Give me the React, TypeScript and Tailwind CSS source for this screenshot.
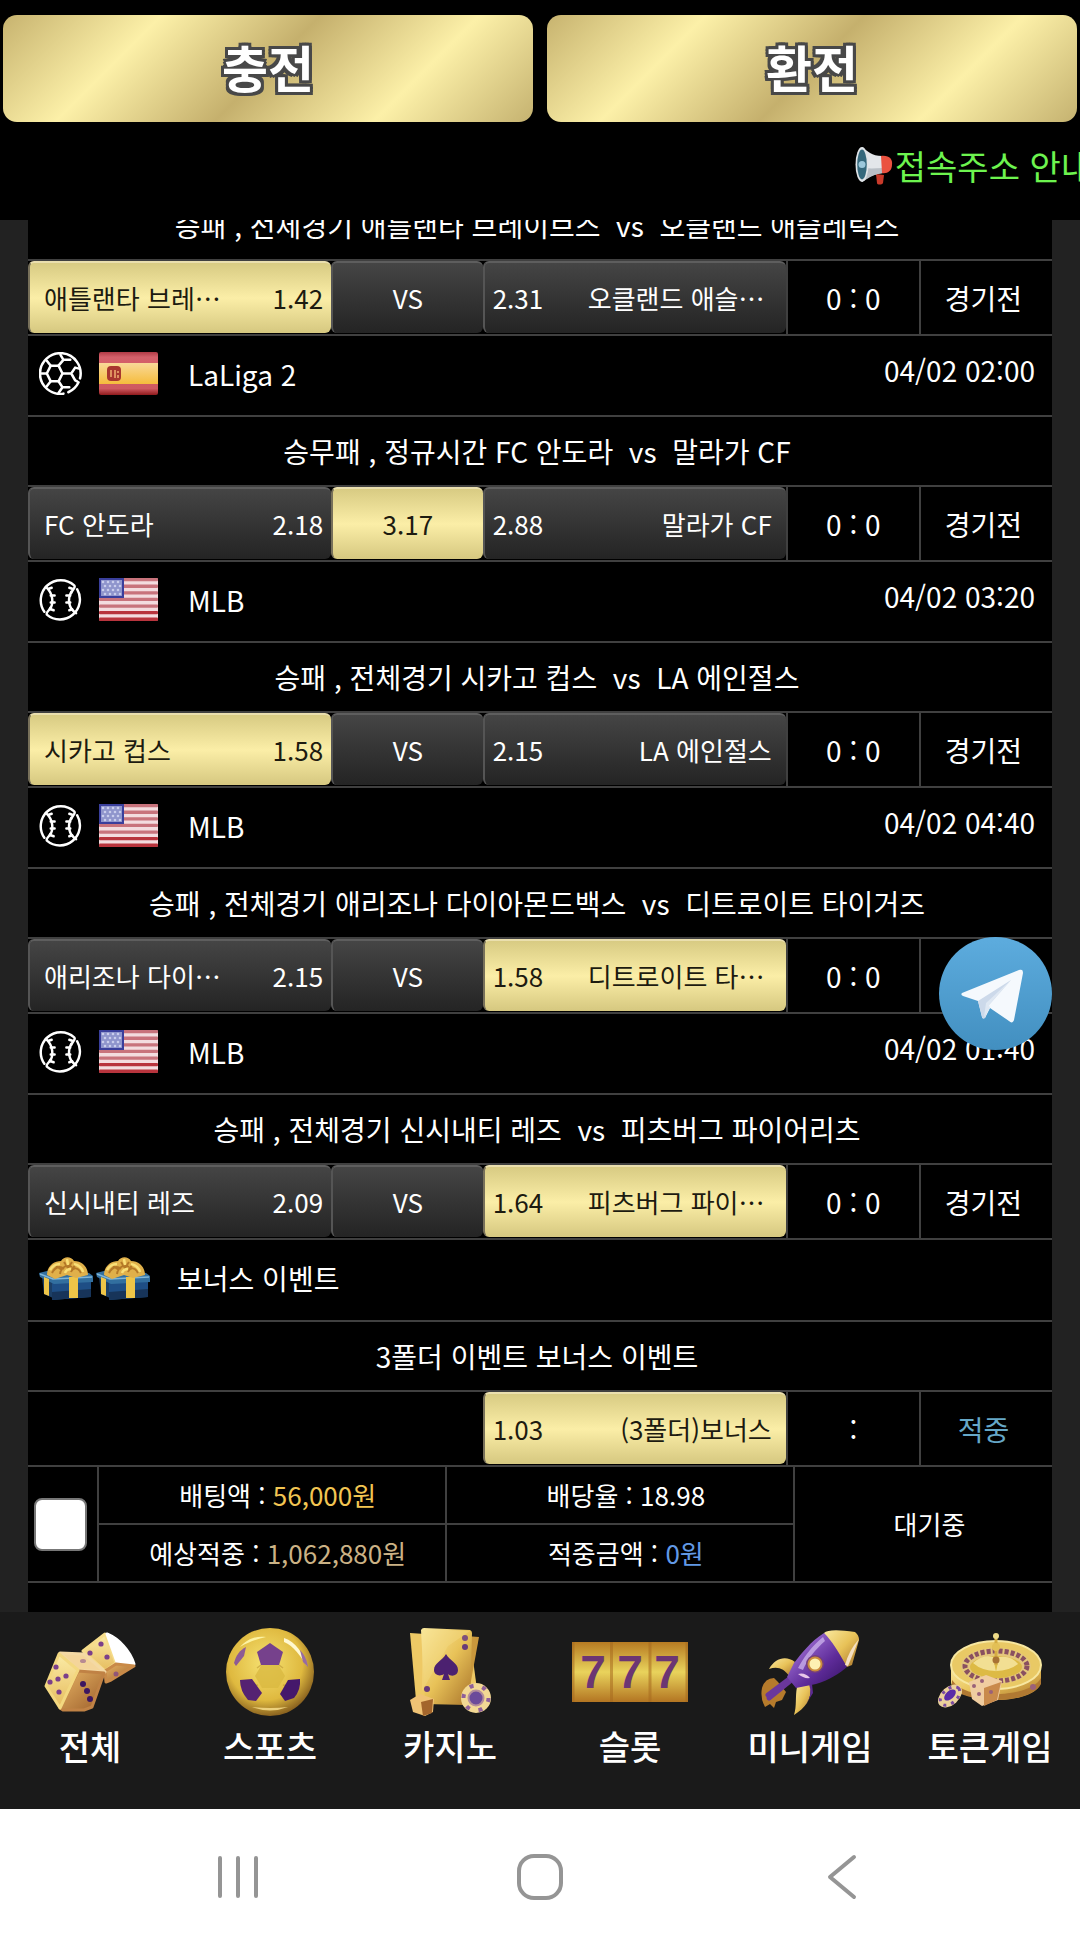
import type { ReactNode } from "react";

type Side = "home" | "draw" | "away";

type Bet = {
  sport: "soccer" | "baseball";
  flag: "es" | "us";
  league: string;
  date: string;
  title: string;
  home: string;
  homeOdds: string;
  draw: string;
  away: string;
  awayOdds: string;
  picked: Side;
};

const firstBet: Bet = {
  sport: "baseball",
  flag: "us",
  league: "MLB",
  date: "04/02 01:15",
  title: "승패 , 전체경기 애틀랜타 브레이브스 \u00a0vs \u00a0오클랜드 애슬레틱스",
  home: "애틀랜타 브레이브스",
  homeOdds: "1.42",
  draw: "VS",
  away: "오클랜드 애슬레틱스",
  awayOdds: "2.31",
  picked: "home",
};

const bets: Bet[] = [
  {
    sport: "soccer",
    flag: "es",
    league: "LaLiga 2",
    date: "04/02 02:00",
    title: "승무패 , 정규시간 FC 안도라 \u00a0vs \u00a0말라가 CF",
    home: "FC 안도라",
    homeOdds: "2.18",
    draw: "3.17",
    away: "말라가 CF",
    awayOdds: "2.88",
    picked: "draw",
  },
  {
    sport: "baseball",
    flag: "us",
    league: "MLB",
    date: "04/02 03:20",
    title: "승패 , 전체경기 시카고 컵스 \u00a0vs \u00a0LA 에인절스",
    home: "시카고 컵스",
    homeOdds: "1.58",
    draw: "VS",
    away: "LA 에인절스",
    awayOdds: "2.15",
    picked: "home",
  },
  {
    sport: "baseball",
    flag: "us",
    league: "MLB",
    date: "04/02 04:40",
    title: "승패 , 전체경기 애리조나 다이아몬드백스 \u00a0vs \u00a0디트로이트 타이거즈",
    home: "애리조나 다이아몬드백스",
    homeOdds: "2.15",
    draw: "VS",
    away: "디트로이트 타이거즈",
    awayOdds: "1.58",
    picked: "away",
  },
  {
    sport: "baseball",
    flag: "us",
    league: "MLB",
    date: "04/02 01:40",
    title: "승패 , 전체경기 신시내티 레즈 \u00a0vs \u00a0피츠버그 파이어리츠",
    home: "신시내티 레즈",
    homeOdds: "2.09",
    draw: "VS",
    away: "피츠버그 파이어리츠",
    awayOdds: "1.64",
    picked: "away",
  },
];

const SoccerIcon = () => (
  <svg viewBox="0 0 44 44" className="h-[43px] w-[43px]" fill="none" stroke="#fff" strokeWidth="2.6" strokeLinecap="round" strokeLinejoin="round">
    <path d="M25 42.6A20.8 20.8 0 1 1 42 27" />
    <path d="M40.5 31A20.8 20.8 0 0 1 30 41.2" />
    <path d="M12 14l8 0 4 8-4 8h-8l-4-8z" />
    <path d="M24 22h9l4-6 4 1M33 22l4 7 2 1M20 14l5-6-3-5M25 8h7M12 14L8 9M20 30l4 6-4 6M24 36h7M12 30l-4 5M8 22H2" />
  </svg>
);

const BaseballIcon = () => (
  <svg viewBox="0 0 44 44" className="h-[43px] w-[43px]" fill="none" stroke="#fff" strokeWidth="2.5" strokeLinecap="round" strokeLinejoin="round">
    <path d="M5.500 34.500A20.500 20.500 0 0 1 36 7.500c2 2-1 3-3 8" />
    <path d="M39 11.500A20.500 20.500 0 0 1 8 37.500c-1-3 2-3 3.500-7" />
    <path d="M7 9c8 7 8 18 4 23M33 14c-4 8-3 17 5 22" />
    <path d="M13 10l-3 1M16 18h-4M16 25h-4M15 33l-3-1M31 10l3 1M28 18h4M28 25h4M31 33l3-1" />
  </svg>
);

const SpainFlag = () => (
  <svg viewBox="0 0 59 43" className="h-[43px] w-[59px]">
    <defs>
      <linearGradient id="esRed" x1="0" y1="0" x2="0" y2="1">
        <stop offset="0" stopColor="#b03a45" />
        <stop offset=".12" stopColor="#d4606a" />
        <stop offset=".85" stopColor="#cf5960" />
        <stop offset="1" stopColor="#8f1a1c" />
      </linearGradient>
      <linearGradient id="esGold" x1="0" y1="0" x2="0" y2="1">
        <stop offset="0" stopColor="#f9d998" />
        <stop offset="1" stopColor="#f5bc3c" />
      </linearGradient>
    </defs>
    <rect width="59" height="43" rx="2" fill="url(#esRed)" />
    <rect y="11" width="59" height="21" fill="url(#esGold)" />
    <rect x="8" y="14" width="14" height="15" rx="4" fill="#a8362e" />
    <path d="M12 18v7M16 18v8M19 19v2M19 23v3" stroke="#f0b070" strokeWidth="1.500" />
  </svg>
);

const UsFlag = () => (
  <svg viewBox="0 0 59 43" className="h-[43px] w-[59px]">
    <rect width="59" height="43" rx="2" fill="#f3dcdf" />
    {[0, 1, 2, 3, 4, 5, 6].map((i) => (
      <rect key={i} y={i * 6.6} width="59" height="3.3" rx="1" fill={i > 4 ? "#b8343d" : "#c8737c"} />
    ))}
    <rect width="25" height="20" fill="#3a3f9c" />
    <rect x="2" y="2" width="21" height="16" fill="#8f95cc" />
    {[4, 8, 12, 16].map((y) =>
      [4, 9, 14, 19].map((x) => <circle key={x + "-" + y} cx={x + (y % 8 ? 0 : 2)} cy={y} r="1.300" fill="#c9cdec" />)
    )}
  </svg>
);

const GiftIcon = () => (
  <svg viewBox="0 0 54 43" className="h-[43px] w-[54px]">
    <path d="M3 20l11 4v17L5 37z" fill="#1c3f66" />
    <path d="M13 22h39v18l-39 3z" fill="#1e4e85" />
    <path d="M13 35l39-3v8l-39 3z" fill="#173459" />
    <path d="M0 16l12-3 38 3 4 3v6l-39 2-14-7z" fill="#326f9f" />
    <path d="M1 17l13 5 39-2" stroke="#7fb6d8" strokeWidth="1.500" fill="none" />
    <path d="M5 20l5 2v17l-5-2zM30 20h9v21h-9z" fill="#eec548" />
    <path d="M8 18C8 9 15 4 22 4c3-5 10-5 13 0 8 0 14 6 14 14l-12 3-9-3-12 4z" fill="#e0b04a" />
    <path d="M13 16c3-6 8-8 12-4M21 17c1-7 7-10 12-7M32 15c2-5 7-5 10 1M25 5l4 6 4-6M17 9l6 4M37 7l-4 5" stroke="#a5661c" strokeWidth="2" fill="none" opacity=".75" />
    <path d="M11 13c3-5 6-6 10-6M35 7c4 1 8 4 9 8M28 2l1 6M26 16c1-3 3-4 6-4" stroke="#f9df77" strokeWidth="2.500" fill="none" />
  </svg>
);

const MegaphoneIcon = () => (
  <svg viewBox="0 0 38 38" className="h-[38px] w-[38px]">
    <path d="M21 27l8 1-1 8c-1 2-6 2-6 0z" fill="#c93a2a" />
    <path d="M7 0c5 4 10 9 20 9l1 17c-9 1-15 4-21 9z" fill="#e3e6ea" />
    <path d="M10 21c7 1 12 0 18 0v5c-9 1-13 4-19 8z" fill="#b9bfc6" />
    <path d="M26 9c8-1 12 3 11 9 0 6-5 9-10 8z" fill="#ea5240" />
    <ellipse cx="7" cy="17.500" rx="6.500" ry="17.500" fill="#dfe4e8" />
    <ellipse cx="7" cy="17.500" rx="4.800" ry="15" fill="#35687c" />
    <circle cx="7" cy="17.500" r="3.500" fill="#9cc8dc" />
  </svg>
);

const TelegramIcon = () => (
  <svg viewBox="0 0 113 113" className="h-[113px] w-[113px]">
    <defs>
      <linearGradient id="tgBlue" x1="0" y1="0" x2="0" y2="1">
        <stop offset="0" stopColor="#5dacde" />
        <stop offset="1" stopColor="#428fc0" />
      </linearGradient>
    </defs>
    <circle cx="56.500" cy="56.500" r="56.500" fill="url(#tgBlue)" />
    <path d="M23 56l57-23c3-1 4 0 4 3L75 83c-1 3-3 3-5 1L51 71l-5 10c-2 1-3 0-3-1l-4-16-15-5c-2-1-2-2-1-3z" fill="#f5f9fd" />
    <path d="M39 64l33-21-22 25-4 13c-2 1-3 0-3-1z" fill="#ccd9ea" />
    <path d="M50 68l22-25-25 23-2 14 6-9z" fill="#dfe8f3" />
  </svg>
);

const GoldDefs = () => (
  <defs>
    <linearGradient id="gold" x1="0" y1="0" x2="1" y2="1">
      <stop offset="0" stopColor="#fae9a0" />
      <stop offset=".5" stopColor="#e8c258" />
      <stop offset="1" stopColor="#a8732a" />
    </linearGradient>
    <linearGradient id="goldSoft" x1="0" y1="0" x2="0" y2="1">
      <stop offset="0" stopColor="#fbeba6" />
      <stop offset="1" stopColor="#e6bc5e" />
    </linearGradient>
    <linearGradient id="goldDark" x1="0" y1="0" x2="1" y2="1">
      <stop offset="0" stopColor="#e8b566" />
      <stop offset="1" stopColor="#9c5e2a" />
    </linearGradient>
    <radialGradient id="goldBall" cx=".45" cy=".4" r=".6">
      <stop offset="0" stopColor="#f6e272" />
      <stop offset=".7" stopColor="#dfb93f" />
      <stop offset="1" stopColor="#8c6420" />
    </radialGradient>
    <linearGradient id="slot" x1="0" y1="0" x2="0" y2="1">
      <stop offset="0" stopColor="#b77b22" />
      <stop offset=".5" stopColor="#e9d35c" />
      <stop offset="1" stopColor="#b37522" />
    </linearGradient>
    <linearGradient id="purple" x1="0" y1="0" x2="1" y2="1">
      <stop offset=".2" stopColor="#9a6bd0" />
      <stop offset=".6" stopColor="#5f2c9a" />
      <stop offset="1" stopColor="#321060" />
    </linearGradient>
  </defs>
);

const DiceIcon = () => (
  <svg viewBox="0 0 92 80" className="h-[80px] w-[92px]" strokeLinejoin="round" strokeWidth="3">
    <GoldDefs />
    <path d="M39 19L61 2l11 29-11 8z" fill="url(#goldSoft)" stroke="#f6dc8a" />
    <path d="M63 2c12 5 23 17 27 30l-17-2z" fill="#fff" stroke="#fff" />
    <path d="M72 32l18 2-23 14-5 2-1-11z" fill="url(#goldDark)" stroke="#c98a48" />
    <path d="M16 21l24 1 21 18-27-2z" fill="#f4d59a" stroke="#f4d9a4" />
    <path d="M34 39l26 2-12 34-8 3H19l-3-2z" fill="url(#goldDark)" stroke="#c08245" />
    <path d="M15 22l19 16-18 38L2 54z" fill="url(#goldSoft)" stroke="#f3d880" />
    <g fill="#7b3f8a">
      <circle cx="12" cy="35" r="2.600" /><circle cx="6" cy="50" r="2.600" /><circle cx="14" cy="47" r="2.600" />
      <circle cx="22" cy="44" r="2.600" /><circle cx="15" cy="60" r="2.600" />
      <circle cx="46" cy="21" r="2.600" /><circle cx="57" cy="12" r="2.600" /><circle cx="63" cy="25" r="2.600" />
      <ellipse cx="39" cy="29" rx="3" ry="2" opacity=".5" /><circle cx="72" cy="42" r="2.500" opacity=".7" />
    </g>
    <g fill="#3d1660">
      <circle cx="39" cy="52" r="3" /><circle cx="43" cy="59" r="3" /><circle cx="46" cy="67" r="3" />
    </g>
  </svg>
);

const GoldBallIcon = () => (
  <svg viewBox="0 0 88 88" className="h-[88px] w-[88px]">
    <circle cx="44" cy="44" r="44" fill="url(#goldBall)" />
    <path d="M35 37L31 40M53 37l4 3M32 57l-5 1M57 57l4 1" stroke="#b58d2c" strokeWidth="1.500" opacity=".5" />
    <path d="M36 36h16l7 12-7 12H36l-7-12z" fill="#d9b941" opacity=".8" />
    <path d="M31 24l13-9 13 9-4 13H35z" fill="#76418c" />
    <path d="M14 52l12-1 10 14-6 8-8-1q-8-9-8-20z" fill="#552272" />
    <path d="M74 51l-12 1-8 14 5 7 9-3q7-8 6-19z" fill="#45186b" />
    <path d="M8 35c2-8 6-13 12-16l-2 9-8 10z" fill="#8e5b94" />
    <path d="M58 10c12 4 19 15 23 28-7-10-13-20-23-24z" fill="#fff8d0" />
    <path d="M74 22c5 5 7 11 8 17l-5-5z" fill="#976ba3" />
    <path d="M14 19c8-9 17-11 26-10-8 2-16 4-26 10z" fill="#fdf3a3" />
    <path d="M26 79q18 7 36 0-18 2-36 0z" fill="#ecd07c" />
  </svg>
);

const CardsIcon = () => (
  <svg viewBox="0 0 83 88" className="h-[88px] w-[83px]">
    <path d="M1 5l60 4 8 60-8 8L7 72z" fill="#eec965" />
    <path d="M30 6l40 3-12 66-40-3z" fill="#c9973c" />
    <path d="M12 2q1-2 3-2l46 2q2 1 2 3l-2 70q-1 3-3 2L16 76z" fill="url(#gold)" />
    <path d="M13 1l48 2-22 15-26 45z" fill="#f5df8d" opacity=".35" />
    <path d="M37 26c4 7 12 9 12 16 0 6-7 7-10 4l2 6h-8l2-6c-4 3-10 1-10-4 0-7 8-9 12-16z" fill="#4c2170" />
    <circle cx="56" cy="10" r="3" fill="#7d4f7c" /><circle cx="56" cy="19" r="3" fill="#683a78" />
    <circle cx="18" cy="61" r="3" fill="#683a78" />
    <path d="M1 72l10-6 14 5-1 13-8 4-12-4z" fill="#f0c375" />
    <path d="M12 74l12-3-1 14-9 3z" fill="#a3652c" />
    <circle cx="67" cy="70" r="15" fill="#f2d894" />
    <circle cx="67" cy="70" r="12.500" fill="none" stroke="#8f609a" strokeWidth="4" strokeDasharray="4 9" />
    <circle cx="67" cy="70" r="7.500" fill="#6b4a9a" stroke="#b58e9a" strokeWidth="2" />
  </svg>
);

const SlotIcon = () => (
  <svg viewBox="0 0 116 60" className="h-[60px] w-[116px]">
    <rect width="116" height="60" fill="url(#slot)" />
    <path d="M39.500 0v60M78 0v60M1 0v60M115 0v60" stroke="#a76a1f" strokeWidth="3" opacity=".55" />
    <g fill="#6c3673" fontFamily="'Liberation Sans', sans-serif" fontSize="46" fontWeight="700" textAnchor="middle">
      <text x="21" y="46">7</text>
      <text x="58" y="46">7</text>
      <text x="95" y="46">7</text>
    </g>
  </svg>
);

const RocketIcon = () => (
  <svg viewBox="0 0 100 86" className="h-[86px] w-[100px]">
    <path d="M2 59q3-10 12-10l4 4 8 10-4 8-6 2-2 6-4-4-5 3q-5-9-3-19z" fill="#b67b2c" />
    <path d="M35 33c-9-7-20-4-26 7 8-3 15-1 20 7z" fill="url(#gold)" />
    <path d="M51 55c1 16-6 24-17 31 3-9 1-18 3-28z" fill="url(#gold)" />
    <path d="M49 55q4 11-3 20l7-11-1-9z" fill="#5c2a92" />
    <path d="M32 48L8 66M30 52L9 69" stroke="#6a379c" strokeWidth="5" strokeLinecap="round" />
    <path d="M64 4C50 13 42 24 34 34l-7 14 9 11 20-4c13-4 23-10 32-18L80 12z" fill="url(#purple)" />
    <path d="M63 8C51 18 44 28 38 39l5 2c5-12 12-20 22-29z" fill="#ceb4ee" opacity=".75" />
    <path d="M64 4q5-5 31-1 4 3 4 8l-7 25-5 2C78 22 72 12 64 4z" fill="url(#gold)" />
    <path d="M99 10l-11 27-3-1q4-15 14-26z" fill="#f4dfc1" />
    <circle cx="55" cy="35" r="9" fill="#753f7c" />
    <circle cx="55" cy="35" r="6.500" fill="#fdf0b2" stroke="#cb8e3d" strokeWidth="2" />
    <path d="M38 45q7-2 12 4-6 1-12-4z" fill="#e8c6e8" />
  </svg>
);

const RouletteIcon = () => (
  <svg viewBox="0 0 105 80" className="h-[80px] w-[105px]">
    <path d="M13 32v18c0 12 30 19 50 18s40-7 40-20V32z" fill="url(#gold)" />
    <path d="M14 48c10 14 30 15 48 14s36-6 41-16v6c-5 10-25 16-44 16s-42-5-45-14z" fill="#b07932" />
    <ellipse cx="58" cy="33" rx="45" ry="24" fill="#e9c965" stroke="#f7e7a0" strokeWidth="2" />
    <ellipse cx="58" cy="34" rx="35" ry="18" fill="#e5c77c" />
    <ellipse cx="58" cy="34" rx="31" ry="15" fill="none" stroke="#8a5060" strokeWidth="5" strokeDasharray="4 2" />
    <ellipse cx="58" cy="35" rx="26" ry="11" fill="#ddba45" />
    <path d="M35 31q10-9 20-6l3 15 3-15q12-2 19 7-9 7-22 7-14 0-23-8z" fill="#fbf0b5" opacity=".7" />
    <path d="M58 3v30" stroke="#d5ad42" strokeWidth="3" />
    <circle cx="58" cy="4" r="3" fill="#eedb89" />
    <circle cx="58" cy="15" r="4" fill="#e3c056" />
    <circle cx="58" cy="28" r="3.500" fill="#a87234" />
    <path d="M31 50l17-7 16 6-4 19-16 6-10-7z" fill="#f0cda0" />
    <path d="M46 56l17-6-4 18-13 6z" fill="#c98a4b" />
    <g fill="#9a6179">
      <circle cx="36" cy="54" r="2" /><circle cx="41" cy="62" r="2" /><circle cx="44" cy="49" r="2" /><circle cx="53" cy="60" r="2" /><circle cx="95" cy="55" r="3" />
    </g>
    <ellipse cx="12" cy="64" rx="14" ry="9" transform="rotate(-42 12 64)" fill="#ecd29c" />
    <ellipse cx="12" cy="64" rx="11.500" ry="7" transform="rotate(-42 12 64)" fill="none" stroke="#7a4ba0" strokeWidth="3" strokeDasharray="3 5" />
    <ellipse cx="12" cy="63" rx="7" ry="4" transform="rotate(-42 12 63)" fill="#5a2ba8" />
  </svg>
);

const navItems = [
  { label: "전체", icon: <DiceIcon /> },
  { label: "스포츠", icon: <GoldBallIcon /> },
  { label: "카지노", icon: <CardsIcon /> },
  { label: "슬롯", icon: <SlotIcon /> },
  { label: "미니게임", icon: <RocketIcon /> },
  { label: "토큰게임", icon: <RouletteIcon /> },
];

const GoldButton = ({ children }: { children: ReactNode }) => (
  <button
    type="button"
    className="h-[107px] flex-1 rounded-[14px] bg-[linear-gradient(135deg,#c7b36f_0%,#fcf0a8_25%,#c5b06d_50%,#fcf0a8_75%,#c5b270_100%)] pb-1.5 text-[50px] font-bold text-white [text-shadow:-3px_-3px_0_#484848,0_-3px_0_#484848,3px_-3px_0_#484848,-3px_0_0_#484848,3px_0_0_#484848,-3px_3px_0_#484848,0_3px_0_#484848,3px_3px_0_#484848]"
  >
    {children}
  </button>
);

const PickButton = ({ active, children }: { active: boolean; children: ReactNode }) => (
  <button
    type="button"
    className={
      active
        ? "flex h-[72px] w-full items-center justify-between rounded-md border-l-2 border-t-2 border-l-[#77705a] border-t-[#eadfae] bg-linear-to-b from-[#d8cb83] via-[#fbeea7] to-[#d6c880] px-2 text-[26px] text-[#1d1b10]"
        : "flex h-[72px] w-full items-center justify-between rounded-md border-l-2 border-t-2 border-l-[#555] border-t-[#5e5e5e] bg-linear-to-b from-[#454545] to-[#242424] px-2 text-[26px] text-white"
    }
  >
    {children}
  </button>
);

const TitleRow = ({ title }: { title: string }) => (
  <tr>
    <td colSpan={5} className="h-[70px] border-b-2 border-[#404040] pr-1.5 text-center">
      {title}
    </td>
  </tr>
);

const PickRow = ({ bet }: { bet: Bet }) => (
  <tr>
    <td className="h-[75px] border-b-2 border-[#404040] align-top">
      <PickButton active={bet.picked === "home"}>
        <span className="ml-1.5 max-w-[184px] truncate">{bet.home}</span>
        <span>{bet.homeOdds}</span>
      </PickButton>
    </td>
    <td className="border-b-2 border-[#404040] align-top">
      <PickButton active={bet.picked === "draw"}>
        <span className="flex-1 text-center">{bet.draw}</span>
      </PickButton>
    </td>
    <td className="border-b-2 border-[#404040] align-top">
      <PickButton active={bet.picked === "away"}>
        <span>{bet.awayOdds}</span>
        <span className="mr-1.5 max-w-[184px] truncate">{bet.away}</span>
      </PickButton>
    </td>
    <td className="border-b-2 border-l-2 border-[#404040] text-center">0 : 0</td>
    <td className="border-b-2 border-l-2 border-[#404040] pr-1.5 text-center">경기전</td>
  </tr>
);

const LeagueRow = ({ bet }: { bet: Bet }) => (
  <tr>
    <td colSpan={5} className="h-[81px] border-b-2 border-[#404040] pb-1">
      <div className="flex items-center pl-[11px] pr-[17px]">
        {bet.sport === "soccer" ? <SoccerIcon /> : <BaseballIcon />}
        <span className="ml-[17px]">{bet.flag === "es" ? <SpainFlag /> : <UsFlag />}</span>
        <span className="ml-[30px]">{bet.league}</span>
        <time className="ml-auto pb-2">{bet.date}</time>
      </div>
    </td>
  </tr>
);

const BetTable = () => (
  <table className="-mt-[29px] w-full table-fixed border-separate border-spacing-0">
    <colgroup>
      <col className="w-[29.6%]" />
      <col className="w-[14.8%]" />
      <col className="w-[29.6%]" />
      <col className="w-[13%]" />
      <col className="w-[13%]" />
    </colgroup>
    <tbody>
      <TitleRow title={firstBet.title} />
      <PickRow bet={firstBet} />
    </tbody>
    {bets.map((bet) => (
      <tbody key={bet.title}>
        <LeagueRow bet={bet} />
        <TitleRow title={bet.title} />
        <PickRow bet={bet} />
      </tbody>
    ))}
    <tbody>
      <tr>
        <td colSpan={5} className="h-[82px] border-b-2 border-[#404040] pb-1">
          <div className="flex items-center gap-[3px] pl-[11px]">
            <GiftIcon />
            <GiftIcon />
            <span className="ml-6">보너스 이벤트</span>
          </div>
        </td>
      </tr>
      <TitleRow title="3폴더 이벤트 보너스 이벤트" />
      <tr>
        <td colSpan={2} className="h-[75px] border-b-2 border-[#404040]"></td>
        <td className="border-b-2 border-[#404040] align-top">
          <PickButton active>
            <span>1.03</span>
            <span className="mr-1.5">(3폴더)보너스</span>
          </PickButton>
        </td>
        <td className="border-b-2 border-l-2 border-[#404040] text-center">:</td>
        <td className="border-b-2 border-l-2 border-[#404040] pr-1.5 text-center text-[#66a8c8]">적중</td>
      </tr>
    </tbody>
  </table>
);

const SummaryTable = () => (
  <table className="w-full table-fixed border-separate border-spacing-0 text-center text-[26px]">
    <colgroup>
      <col className="w-[6.7%]" />
      <col className="w-[34%]" />
      <col className="w-[34%]" />
      <col />
    </colgroup>
    <tbody>
      <tr>
        <td rowSpan={2} className="border-b-2 border-[#404040]">
          <input
            type="checkbox"
            aria-label="배팅 선택"
            className="ml-1.5 block h-[53px] w-[53px] appearance-none rounded-lg border-2 border-[#777] bg-white"
          />
        </td>
        <td className="h-[58px] border-b-2 border-l-2 border-[#404040] pl-3">
          배팅액 : <span className="text-[#f2c552]">56,000원</span>
        </td>
        <td className="border-b-2 border-l-2 border-[#404040] pl-3">배당율 : 18.98</td>
        <td rowSpan={2} className="border-b-2 border-l-2 border-[#404040] pl-3">대기중</td>
      </tr>
      <tr>
        <td className="h-[58px] border-b-2 border-l-2 border-[#404040] pl-3">
          예상적중 : <span className="text-[#cbb285]">1,062,880원</span>
        </td>
        <td className="border-b-2 border-l-2 border-[#404040] pl-3">
          적중금액 : <span className="text-[#6299e6]">0원</span>
        </td>
      </tr>
    </tbody>
  </table>
);

const App = () => {
  return (
    <div lang="ko" className="flex h-screen flex-col overflow-hidden bg-black font-['Noto_Sans_CJK_KR','Noto_Sans',sans-serif] text-[28px] leading-10 text-white">
      <header className="h-[220px] shrink-0">
        <div className="flex gap-[14px] px-[3px] pt-[15px]">
          <GoldButton>충전</GoldButton>
          <GoldButton>환전</GoldButton>
        </div>
        <div className="mt-6 flex justify-end overflow-hidden">
          <a href="#notice" className="-mr-3 flex shrink-0 items-center gap-0.5 whitespace-nowrap text-[34px] text-[#6df44f]">
            <MegaphoneIcon />
            접속주소 안내
          </a>
        </div>
      </header>

      <main className="flex min-h-0 flex-1 flex-col overflow-hidden bg-[#222] px-7">
        <div className="flex-1 bg-black">
          <BetTable />
          <SummaryTable />
        </div>
      </main>

      <nav className="grid h-[197px] shrink-0 grid-cols-6 bg-[#1a1a1a] pt-3">
        {navItems.map((item) => (
          <a key={item.label} href="#menu" className="flex flex-col items-center text-[34px] font-medium">
            <span className="flex h-24 items-center">{item.icon}</span>
            <span className="mt-0.5 whitespace-nowrap leading-12">{item.label}</span>
          </a>
        ))}
      </nav>

      <footer className="grid h-[135px] shrink-0 grid-cols-3 place-items-center bg-white px-[87px]">
        <button type="button" aria-label="최근 앱">
          <svg viewBox="0 0 46 46" className="h-[46px] w-[46px]" stroke="#959595" strokeWidth="4" strokeLinecap="round">
            <path d="M5 4v38M23 4v38M41 4v38" />
          </svg>
        </button>
        <button type="button" aria-label="홈">
          <svg viewBox="0 0 46 46" className="h-[46px] w-[46px]" fill="none" stroke="#959595" strokeWidth="4">
            <rect x="2" y="2" width="42" height="42" rx="15" />
          </svg>
        </button>
        <button type="button" aria-label="뒤로">
          <svg viewBox="0 0 46 46" className="h-[46px] w-[46px]" fill="none" stroke="#959595" strokeWidth="4" strokeLinecap="round" strokeLinejoin="round">
            <path d="M35 3L11 23l24 20" />
          </svg>
        </button>
      </footer>

      <a href="#telegram" aria-label="텔레그램" className="fixed right-7 bottom-[894px]">
        <TelegramIcon />
      </a>
    </div>
  );
};

export default App;
